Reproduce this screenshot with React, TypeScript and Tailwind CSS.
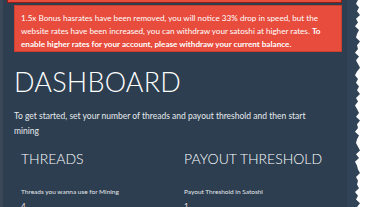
import React from "react";

const font = { fontFamily: "Lato, 'Open Sans', sans-serif" };

// torn paper edge on the right side of the screenshot
const tear = [
  3, 1, 4, 2, 5, 1, 3, 0, 4, 2, 1, 5, 2, 3, 0, 4, 1, 3, 5, 2, 0, 3, 1, 4, 2, 5, 1, 3, 0, 2,
  4, 1, 5, 2, 3, 0, 4, 2, 1, 3, 5, 1, 4, 0, 2, 3, 5, 1, 3, 2, 4, 0, 3, 1, 5, 2,
];

function TornEdge() {
  const step = 207 / (tear.length - 1);
  const pts = tear.map((d, i) => `${d + 1},${(i * step).toFixed(1)}`).join(" ");
  return (
    <svg
      className="absolute right-0 top-0"
      width="14"
      height="207"
      viewBox="0 0 14 207"
    >
      <polygon points={`14,0 ${pts} 14,207`} fill="#ffffff" />
    </svg>
  );
}

export default function App() {
  return (
    <div className="relative w-[368px] h-[207px] overflow-hidden bg-[#2c3e50]" style={font}>
      <div className="flex h-full">
        <div className="w-[3px] h-full bg-[#3b4858]" />
        <div className="w-[344px] h-full relative">
          <div className="absolute left-[4px] top-0 w-[335px] h-[3px] bg-[#e74c3c] border-x border-b border-[#8e1f16]" />
          <div className="pt-[5px] pl-[11px]">
            <div className="w-[328px] h-[47px] bg-[#e74c3c] border border-[#c9402f] px-[6px] pt-[6px] text-[8.15px] leading-[13px] text-white">
              1.5x Bonus hasrates have been removed, you will notice 33% drop in speed, but the website
              rates have been increased, you can withdraw your satoshi at higher rates.{" "}
              <span className="font-bold">
                To enable higher rates for your account, please withdraw your current balance.
              </span>
            </div>
            <h1 className="mt-[16px] text-[27px] leading-[27px] font-light text-white tracking-[0.2px]">
              DASHBOARD
            </h1>
            <p className="mt-[14px] w-[318px] text-[8.5px] leading-[15px] text-[#e6e9ec]">
              To get started, set your number of threads and payout threshold and then start mining
            </p>
            <div className="mt-[13px] pl-[7px] grid grid-cols-[163px_163px]">
              <div>
                <h2 className="text-[14px] leading-[14px] font-light text-white">THREADS</h2>
                <div className="mt-[22px] text-[6.5px] leading-[8px] text-[#e6e9ec]">
                  Threads you wanna use for Mining
                </div>
                <div className="mt-[5px] text-[8px] leading-[10px] text-[#f3dede]">4</div>
              </div>
              <div>
                <h2 className="text-[14px] leading-[14px] font-light text-white">PAYOUT THRESHOLD</h2>
                <div className="mt-[22px] text-[6.5px] leading-[8px] text-[#e6e9ec]">
                  Payout Threshold in Satoshi
                </div>
                <div className="mt-[5px] text-[8px] leading-[10px] text-[#f3dede]">1</div>
              </div>
            </div>
          </div>
        </div>
        <div className="w-[21px] h-full bg-[#304357]" />
      </div>
      <TornEdge />
    </div>
  );
}
